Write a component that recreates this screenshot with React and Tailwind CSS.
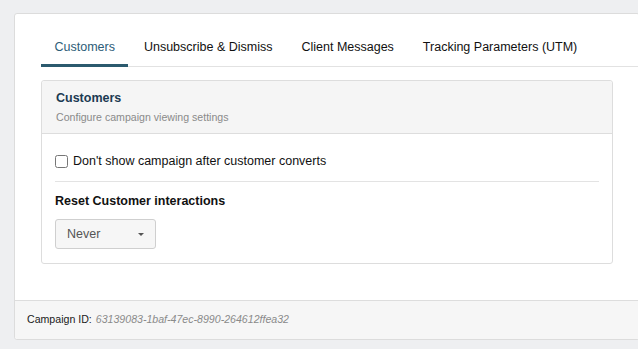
import React from 'react';

const tabs = ['Customers', 'Unsubscribe & Dismiss', 'Client Messages', 'Tracking Parameters (UTM)'];

export default function App() {
  const [active, setActive] = React.useState('Customers');
  const [hideAfterConvert, setHideAfterConvert] = React.useState(false);

  return (
    <div
      className="h-[349px] overflow-hidden bg-[#eeeff1] pt-[13px] pl-[14px]"
      style={{ fontFamily: '"Liberation Sans", Arial, sans-serif' }}
    >
      <div className="w-[626px] bg-white border border-[#dcdcdc] rounded-[3px]">
        <div className="pl-[26px] pr-[26px] pt-[24px] pb-[36px]">
          {/* tabs */}
          <div className="flex gap-[2px] border-b border-[#e2e2e2] -mr-[26px]">
            {tabs.map((t) => (
              <button
                key={t}
                onClick={() => setActive(t)}
                className={
                  'px-[13.5px] pb-[8px] leading-[18px] text-[12.5px] border-b-[3px] -mb-px whitespace-nowrap ' +
                  (active === t
                    ? 'border-[#2b5a6e] text-[#2d5d78]'
                    : 'border-transparent text-[#111]')
                }
              >
                {t}
              </button>
            ))}
          </div>

          {/* panel */}
          <div className="mt-[13px] border border-[#dddddd] rounded-[3px]">
            <div className="bg-[#f5f5f5] border-b border-[#dddddd] pl-[14px] pt-[9px] pb-[10px] rounded-t-[3px]">
              <div className="text-[12.5px] leading-[16px] font-bold text-[#1c3a52]">Customers</div>
              <div className="mt-[5px] text-[10.6px] leading-[12px] text-[#8a8a8a]">
                Configure campaign viewing settings
              </div>
            </div>
            <div className="px-[13px] pt-[18px] pb-[14px]">
              <label className="flex items-center gap-[5px] text-[12.5px] leading-[18px] text-[#111] cursor-pointer">
                <input
                  type="checkbox"
                  checked={hideAfterConvert}
                  onChange={(e) => setHideAfterConvert(e.target.checked)}
                  className="m-0 w-[13px] h-[13px]"
                />
                Don't show campaign after customer converts
              </label>
              <div className="mt-[11px] border-t border-[#e3e3e3]"></div>
              <div className="mt-[10px] text-[12.5px] leading-[18px] font-bold text-[#111]">
                Reset Customer interactions
              </div>
              <button className="mt-[9px] flex items-center justify-between w-[101px] h-[30px] pl-[11px] pr-[11px] bg-[#f6f6f6] border border-[#cfcfcf] rounded-[3px] text-[12.5px] text-[#555]">
                <span>Never</span>
                <span className="w-0 h-0 border-t-[3px] border-t-[#555] border-x-[3px] border-x-transparent"></span>
              </button>
            </div>
          </div>
        </div>

        {/* footer */}
        <div className="bg-[#f6f6f6] border-t border-[#dddddd] h-[39px] flex items-center pl-[12px] text-[10.6px] rounded-b-[3px]">
          <span className="text-[#1a1a1a]">Campaign ID:</span>
          <span className="ml-[4px] italic text-[#8a8a8a]">63139083-1baf-47ec-8990-264612ffea32</span>
        </div>
      </div>
    </div>
  );
}
